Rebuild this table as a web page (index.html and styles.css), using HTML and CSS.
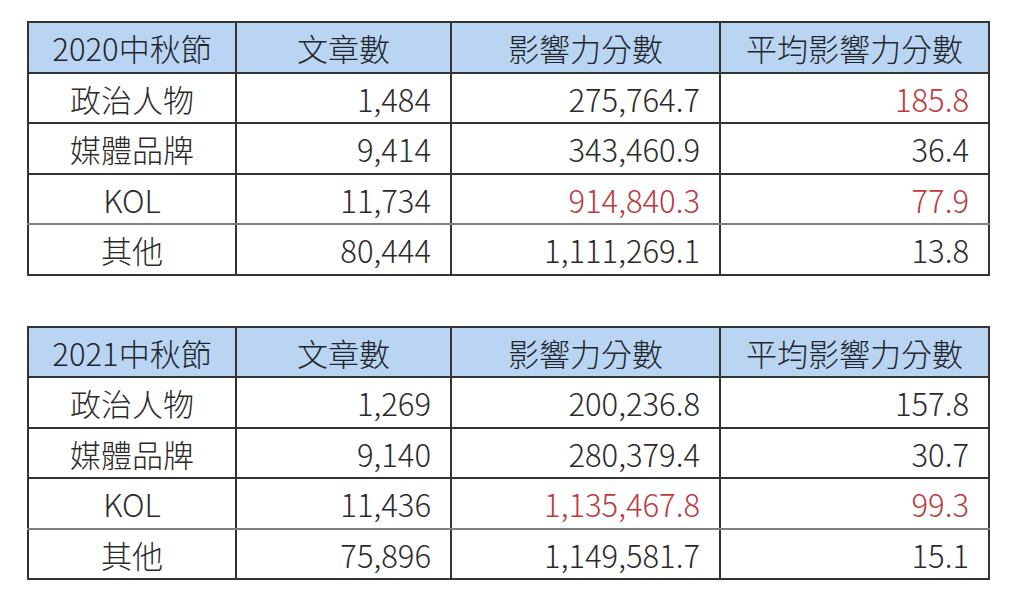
FILE: index.html
```html
<!DOCTYPE html>
<html lang="zh-Hant">
<head>
<meta charset="utf-8">
<link rel="stylesheet" href="styles.css">
</head>
<body>
<div class="page">
  <table class="stats">
    <colgroup><col class="c1"><col class="c2"><col class="c3"><col class="c4"></colgroup>
    <thead>
      <tr><th>2020中秋節</th><th>文章數</th><th>影響力分數</th><th>平均影響力分數</th></tr>
    </thead>
    <tbody>
      <tr><td class="name">政治人物</td><td>1,484</td><td>275,764.7</td><td class="hl">185.8</td></tr>
      <tr><td class="name">媒體品牌</td><td>9,414</td><td>343,460.9</td><td>36.4</td></tr>
      <tr class="grey"><td class="name">KOL</td><td>11,734</td><td class="hl">914,840.3</td><td class="hl">77.9</td></tr>
      <tr><td class="name">其他</td><td>80,444</td><td>1,111,269.1</td><td>13.8</td></tr>
    </tbody>
  </table>
  <table class="stats">
    <colgroup><col class="c1"><col class="c2"><col class="c3"><col class="c4"></colgroup>
    <thead>
      <tr><th>2021中秋節</th><th>文章數</th><th>影響力分數</th><th>平均影響力分數</th></tr>
    </thead>
    <tbody>
      <tr><td class="name">政治人物</td><td>1,269</td><td>200,236.8</td><td>157.8</td></tr>
      <tr><td class="name">媒體品牌</td><td>9,140</td><td>280,379.4</td><td>30.7</td></tr>
      <tr class="grey"><td class="name">KOL</td><td>11,436</td><td class="hl">1,135,467.8</td><td class="hl">99.3</td></tr>
      <tr><td class="name">其他</td><td>75,896</td><td>1,149,581.7</td><td>15.1</td></tr>
    </tbody>
  </table>
</div>
</body>
</html>
```

FILE: styles.css
```css
html, body {
  margin: 0;
  padding: 0;
  background: #ffffff;
}
.page {
  padding: 21px 0 0 27px;
  display: flex;
  flex-direction: column;
  gap: 50px;
  font-family: "Noto Sans CJK TC", "Noto Sans", sans-serif;
  font-weight: 300;
  font-variant-numeric: proportional-nums;
  color: #2b2b2b;
}
.stats {
  border-collapse: collapse;
  table-layout: fixed;
  width: 963px;
  border: 2px solid #111;
}
.c1 { width: 208px; }
.c2 { width: 215px; }
.c3 { width: 269px; }
.c4 { width: 269px; }
.stats th, .stats td {
  height: 46.5px;
  padding: 2px 19px 0 0;
  font-size: 31px;
  line-height: 32px;
  border: 2px solid #333;
  text-align: right;
  white-space: nowrap;
  font-weight: 300;
}
.stats th {
  background: #b9d5f1;
  text-align: center;
  padding: 2px 0 0 0;
  color: #1f2630;
}
.stats td.name {
  text-align: center;
  padding: 2px 0 0 0;
}
.stats tr.grey td {
  border-bottom-color: #808080;
}
.stats td.hl {
  color: #bd3a3e;
}
```
